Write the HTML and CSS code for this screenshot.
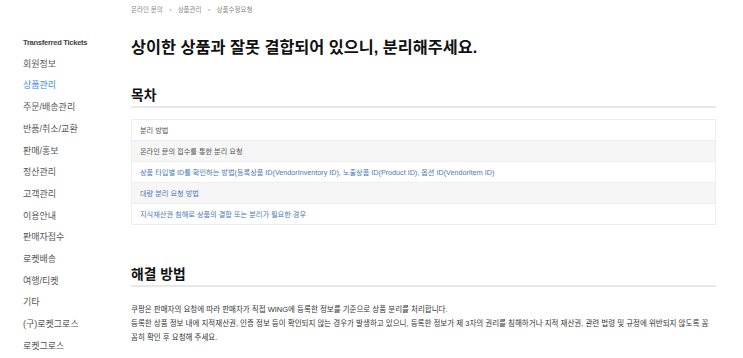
FILE: index.html
```html
<!DOCTYPE html>
<html lang="ko">
<head>
    <meta charset="UTF-8">
    <meta name="viewport" content="width=device-width, initial-scale=1.0">
    <title>상품 분리 요청</title>
    <link rel="stylesheet" href="styles.css">
</head>
<body>
    <div class="page">
        <!-- Left category menu -->
        <nav class="sidebar">
            <div class="sidebar-title">Transferred Tickets</div>
            <a class="menu-item" href="#">회원정보</a>
            <a class="menu-item active" href="#">상품관리</a>
            <a class="menu-item" href="#">주문/배송관리</a>
            <a class="menu-item" href="#">반품/취소/교환</a>
            <a class="menu-item" href="#">판매/홍보</a>
            <a class="menu-item" href="#">정산관리</a>
            <a class="menu-item" href="#">고객관리</a>
            <a class="menu-item" href="#">이용안내</a>
            <a class="menu-item" href="#">판매자점수</a>
            <a class="menu-item" href="#">로켓배송</a>
            <a class="menu-item" href="#">여행/티켓</a>
            <a class="menu-item" href="#">기타</a>
            <a class="menu-item" href="#">(구)로켓그로스</a>
            <a class="menu-item" href="#">로켓그로스</a>
        </nav>

        <!-- Article -->
        <main class="article">
            <div class="breadcrumb">
                <a href="#">온라인 문의</a><span class="sep">&gt;</span><a href="#">상품관리</a><span class="sep">&gt;</span><a href="#">상품수정요청</a>
            </div>

            <h1 class="article-title">상이한 상품과 잘못 결합되어 있으니, 분리해주세요.</h1>

            <h2 class="section-title">목차</h2>
            <ul class="toc">
                <li><a href="#" class="visited">분리 방법</a></li>
                <li><a href="#" class="visited">온라인 문의 접수를 통한 분리 요청</a></li>
                <li><a href="#">상품 타입별 ID를 확인하는 방법(등록상품 ID(VendorInventory ID), 노출상품 ID(Product ID), 옵션 ID(VendorItem ID)</a></li>
                <li><a href="#">대량 분리 요청 방법</a></li>
                <li><a href="#">지식재산권 침해로 상품의 결합 또는 분리가 필요한 경우</a></li>
            </ul>

            <h2 class="section-title solve">해결 방법</h2>
            <p class="body-text">쿠팡은 판매자의 요청에 따라 판매자가 직접 WING에 등록한 정보를 기준으로 상품 분리를 처리합니다.<br>등록한 상품 정보 내에 지적재산권, 인증 정보 등이 확인되지 않는 경우가 발생하고 있으니, 등록한 정보가 제 3자의 권리를 침해하거나 지적 재산권, 관련 법령 및 규정에 위반되지 않도록 꼼꼼히 확인 후 요청해 주세요.</p>
        </main>
    </div>
</body>
</html>
```

FILE: styles.css
```css
/* Base */
body {
    margin: 0;
    font-family: "Liberation Sans", "Noto Sans CJK KR", sans-serif;
    color: #333;
    background-color: #fff;
}

a {
    text-decoration: none;
}

.page {
    display: flex;
}

/* Sidebar */
.sidebar {
    width: 108px;
    padding: 32px 0 0 23px;
    display: flex;
    flex-direction: column;
    flex-shrink: 0;
}

.sidebar-title {
    font-size: 7.6px;
    font-weight: bold;
    letter-spacing: -0.3px;
    color: #444;
    line-height: 21.7px;
}

.menu-item {
    font-size: 9px;
    line-height: 21.7px;
    color: #555;
}

.menu-item.active {
    color: #3b8de0;
}

/* Article */
.article {
    width: 585px;
    padding-top: 3px;
}

.breadcrumb {
    font-size: 6.5px;
    line-height: 14px;
    color: #888;
}

.breadcrumb a {
    color: #888;
}

.breadcrumb .sep {
    margin: 0 6px;
    font-size: 5px;
}

.article-title {
    margin: 19px 0 0;
    font-size: 16.3px;
    line-height: 22px;
    font-weight: bold;
    color: #111;
}

.section-title {
    margin: 29px 0 0;
    padding-bottom: 1px;
    font-size: 13.8px;
    line-height: 18px;
    font-weight: bold;
    color: #111;
    border-bottom: 2px solid #e8e8e8;
}

.section-title.solve {
    margin-top: 41px;
}

/* Table of contents */
.toc {
    list-style: none;
    margin: 11px 0 0;
    padding: 0;
    border: 1px solid #eee;
}

.toc li {
    height: 20px;
    padding: 0 8px;
    display: flex;
    align-items: center;
    font-size: 7.2px;
    border-top: 1px solid #eee;
}

.toc li:first-child {
    border-top: none;
}

.toc li:nth-child(even) {
    background-color: #f6f6f6;
}

.toc a {
    color: #4a78b8;
}

.toc a.visited {
    color: #555;
}

/* Body text */
.body-text {
    max-width: 580px;
    margin: 16px 0 0;
    font-size: 7.5px;
    line-height: 14px;
    color: #333;
}
```
